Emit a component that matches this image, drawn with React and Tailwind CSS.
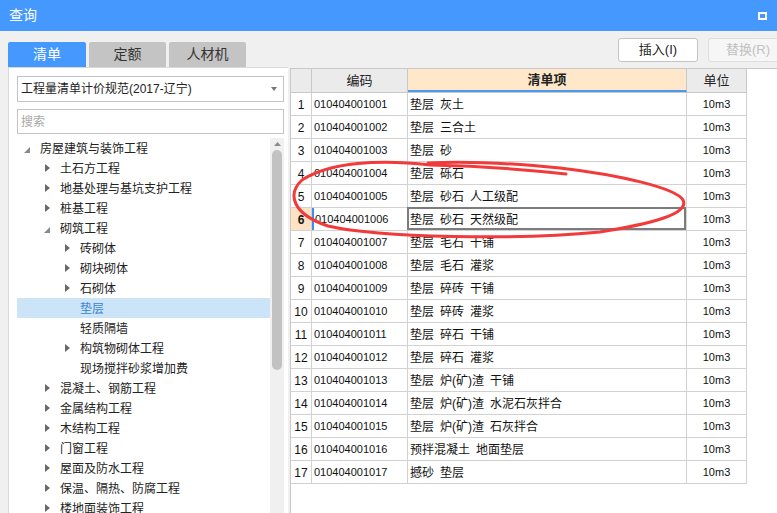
import React from "react";

const TREE = [
  { level: 0, text: "房屋建筑与装饰工程", arrow: "open" },
  { level: 1, text: "土石方工程", arrow: "closed" },
  { level: 1, text: "地基处理与基坑支护工程", arrow: "closed" },
  { level: 1, text: "桩基工程", arrow: "closed" },
  { level: 1, text: "砌筑工程", arrow: "open" },
  { level: 2, text: "砖砌体", arrow: "closed" },
  { level: 2, text: "砌块砌体", arrow: "closed" },
  { level: 2, text: "石砌体", arrow: "closed" },
  { level: 2, text: "垫层", selected: true },
  { level: 2, text: "轻质隔墙" },
  { level: 2, text: "构筑物砌体工程", arrow: "closed" },
  { level: 2, text: "现场搅拌砂浆增加费" },
  { level: 1, text: "混凝土、钢筋工程", arrow: "closed" },
  { level: 1, text: "金属结构工程", arrow: "closed" },
  { level: 1, text: "木结构工程", arrow: "closed" },
  { level: 1, text: "门窗工程", arrow: "closed" },
  { level: 1, text: "屋面及防水工程", arrow: "closed" },
  { level: 1, text: "保温、隔热、防腐工程", arrow: "closed" },
  { level: 1, text: "楼地面装饰工程", arrow: "closed" },
];

const INDENT = ["pl-[7px]", "pl-[27px]", "pl-[47px]"];

const ROWS = [
  ["010404001001", "垫层 灰土"],
  ["010404001002", "垫层 三合土"],
  ["010404001003", "垫层 砂"],
  ["010404001004", "垫层 砾石"],
  ["010404001005", "垫层 砂石 人工级配"],
  ["010404001006", "垫层 砂石 天然级配"],
  ["010404001007", "垫层 毛石 干铺"],
  ["010404001008", "垫层 毛石 灌浆"],
  ["010404001009", "垫层 碎砖 干铺"],
  ["010404001010", "垫层 碎砖 灌浆"],
  ["010404001011", "垫层 碎石 干铺"],
  ["010404001012", "垫层 碎石 灌浆"],
  ["010404001013", "垫层 炉(矿)渣 干铺"],
  ["010404001014", "垫层 炉(矿)渣 水泥石灰拌合"],
  ["010404001015", "垫层 炉(矿)渣 石灰拌合"],
  ["010404001016", "预拌混凝土 地面垫层"],
  ["010404001017", "撼砂 垫层"],
];

const Arrow = ({ type }) => {
  if (type === "open")
    return (
      <svg width="6" height="6" className="mt-[4px]">
        <polygon points="6,0 6,6 0,6" fill="#8a8a8a" />
      </svg>
    );
  if (type === "closed")
    return (
      <svg width="5" height="8" className="ml-[1px]">
        <polygon points="0,0 5,4 0,8" fill="#6a6a6a" />
      </svg>
    );
  return null;
};

const TreePanel = () => (
  <div className="w-[280px] bg-white border-l border-t border-[#d9d9d9] flex flex-col pl-[8px] pr-[4px] pt-[8px] overflow-hidden">
    <div className="h-[26px] border border-[#c4c4c4] bg-white flex items-center justify-between pl-[3px] pr-[6px] text-[12px] text-[#222]">
      <span>工程量清单计价规范(2017-辽宁)</span>
      <svg width="6" height="4">
        <polygon points="0,0 6,0 3,4" fill="#777" />
      </svg>
    </div>
    <div className="mt-[7px] h-[25px] border border-[#c4c4c4] bg-white flex items-center pl-[3px] text-[12px] text-[#a8a8a8]">
      搜索
    </div>
    <div className="mt-[4px] flex flex-1 min-h-0">
      <div className="flex-1 flex flex-col">
        {TREE.map((node, i) => (
          <div
            key={i}
            className={`h-[20px] shrink-0 flex items-center ${INDENT[node.level]} ${
              node.selected ? "bg-[#cce4f7] text-[#3a86d6]" : "text-[#222]"
            }`}
          >
            <div className="w-[16px] flex items-center">
              <Arrow type={node.arrow} />
            </div>
            <span className="text-[12px] leading-none pt-px">{node.text}</span>
          </div>
        ))}
      </div>
      <div className="w-[14px] bg-[#f0f0f0] flex flex-col items-center">
        <svg width="7" height="4" className="mt-[4px]">
          <polygon points="3.5,0 7,4 0,4" fill="#8a8a8a" />
        </svg>
        <div className="mt-[4px] w-[10px] h-[220px] rounded-full bg-[#c2c2c2]" />
      </div>
    </div>
  </div>
);

const Words = ({ text }) => (
  <span className="flex gap-[6px]">
    {text.split(" ").map((w, i) => (
      <span key={i}>{w}</span>
    ))}
  </span>
);

const Grid = () => (
  <div className="flex-1 mt-px bg-white border-l border-t border-[#c8c8c8] overflow-hidden">
    <div className="w-[456px] flex h-[24px] border-b border-[#c8c8c8] text-[13px] text-[#222]">
      <div className="w-[21px] shrink-0 bg-[#ebebeb] border-r border-[#c8c8c8]" />
      <div className="w-[96px] shrink-0 bg-[#ebebeb] border-r border-[#c8c8c8] flex items-center justify-center">
        编码
      </div>
      <div className="w-[279px] shrink-0 bg-[#fee8c9] border-r border-[#c8c8c8] border-b-2 border-b-[#4a9bf0] flex items-center justify-center font-bold">
        清单项
      </div>
      <div className="w-[60px] shrink-0 bg-[#ebebeb] border-r border-[#c8c8c8] flex items-center justify-center">
        单位
      </div>
    </div>
    {ROWS.map(([code, name], i) => {
      const active = i === 5;
      return (
        <div
          key={code}
          className="w-[456px] flex h-[23px] border-b border-[#d2d2d2] text-[#111]"
        >
          <div
            className={`w-[21px] shrink-0 border-r border-[#d2d2d2] flex items-center justify-center pt-px text-[12px] font-['Liberation_Sans',sans-serif] ${
              active ? "bg-[#fde3c3] font-bold" : ""
            }`}
          >
            {i + 1}
          </div>
          <div
            className={`w-[96px] shrink-0 border-r border-[#d2d2d2] flex items-center pt-px text-[11px] font-['Liberation_Sans',sans-serif] ${
              active ? "border-l-2 border-l-[#3d8ef0] pl-px" : "pl-[2px]"
            }`}
          >
            {code}
          </div>
          <div className="relative w-[279px] shrink-0 border-r border-[#d2d2d2] flex items-center pl-[2px] pt-px text-[12px]">
            <Words text={name} />
            {active && (
              <div className="absolute -left-px -top-px right-0 bottom-0 border-2 border-[#7c7c7c]" />
            )}
          </div>
          <div className="w-[60px] shrink-0 border-r border-[#d2d2d2] flex items-center justify-center pt-px text-[11px] font-['Liberation_Sans',sans-serif]">
            10m3
          </div>
        </div>
      );
    })}
  </div>
);

export default function App() {
  return (
    <div className="relative w-[777px] h-[513px] overflow-hidden bg-[#f0f0f0] flex flex-col font-['Liberation_Sans','Noto_Sans_CJK_SC',sans-serif]">
      <div className="h-[31px] shrink-0 bg-[#4599fe] flex items-center justify-between pl-[9px] pr-[10px]">
        <span className="text-white text-[14px]">查询</span>
        <div className="w-[9px] h-[8px] border-2 border-white" />
      </div>

      <div className="h-[36px] shrink-0 flex justify-between pl-[8px]">
        <div className="flex items-end gap-[3px]">
          <div className="w-[78px] h-[25px] rounded-t-[2px] bg-[#4599fe] text-white text-[14px] flex items-center justify-center">
            清单
          </div>
          <div className="w-[77px] h-[25px] rounded-t-[2px] bg-[#c4c4c4] text-[#333] text-[14px] flex items-center justify-center">
            定额
          </div>
          <div className="w-[77px] h-[25px] rounded-t-[2px] bg-[#c4c4c4] text-[#333] text-[14px] flex items-center justify-center">
            人材机
          </div>
        </div>
        <div className="flex gap-[10px] pt-[7px]">
          <div className="w-[80px] h-[24px] bg-white border border-[#c4c4c4] rounded-[3px] flex items-center justify-center text-[13px] text-[#222]">
            插入(I)
          </div>
          <div className="w-[80px] h-[24px] bg-[#f6f6f6] border border-[#dedede] rounded-[3px] flex items-center justify-center text-[13px] text-[#c0c0c0] -mr-[11px]">
            替换(R)
          </div>
        </div>
      </div>

      <div className="flex-1 flex min-h-0 pl-[8px] gap-[2px]">
        <TreePanel />
        <Grid />
      </div>

      <svg
        className="absolute left-0 top-0 pointer-events-none"
        width="777"
        height="513"
      >
        <path
          d="M 566 174 C 530 170, 480 166, 430 165 C 380 159, 330 162, 302 180 C 287 194, 292 214, 328 226 C 380 238, 520 240, 600 232 C 650 224, 690 214, 683 200 C 676 188, 620 175, 560 168 C 510 163, 465 161, 428 163"
          fill="none"
          stroke="#f23a3a"
          strokeWidth="3"
          strokeLinecap="round"
        />
      </svg>
    </div>
  );
}
